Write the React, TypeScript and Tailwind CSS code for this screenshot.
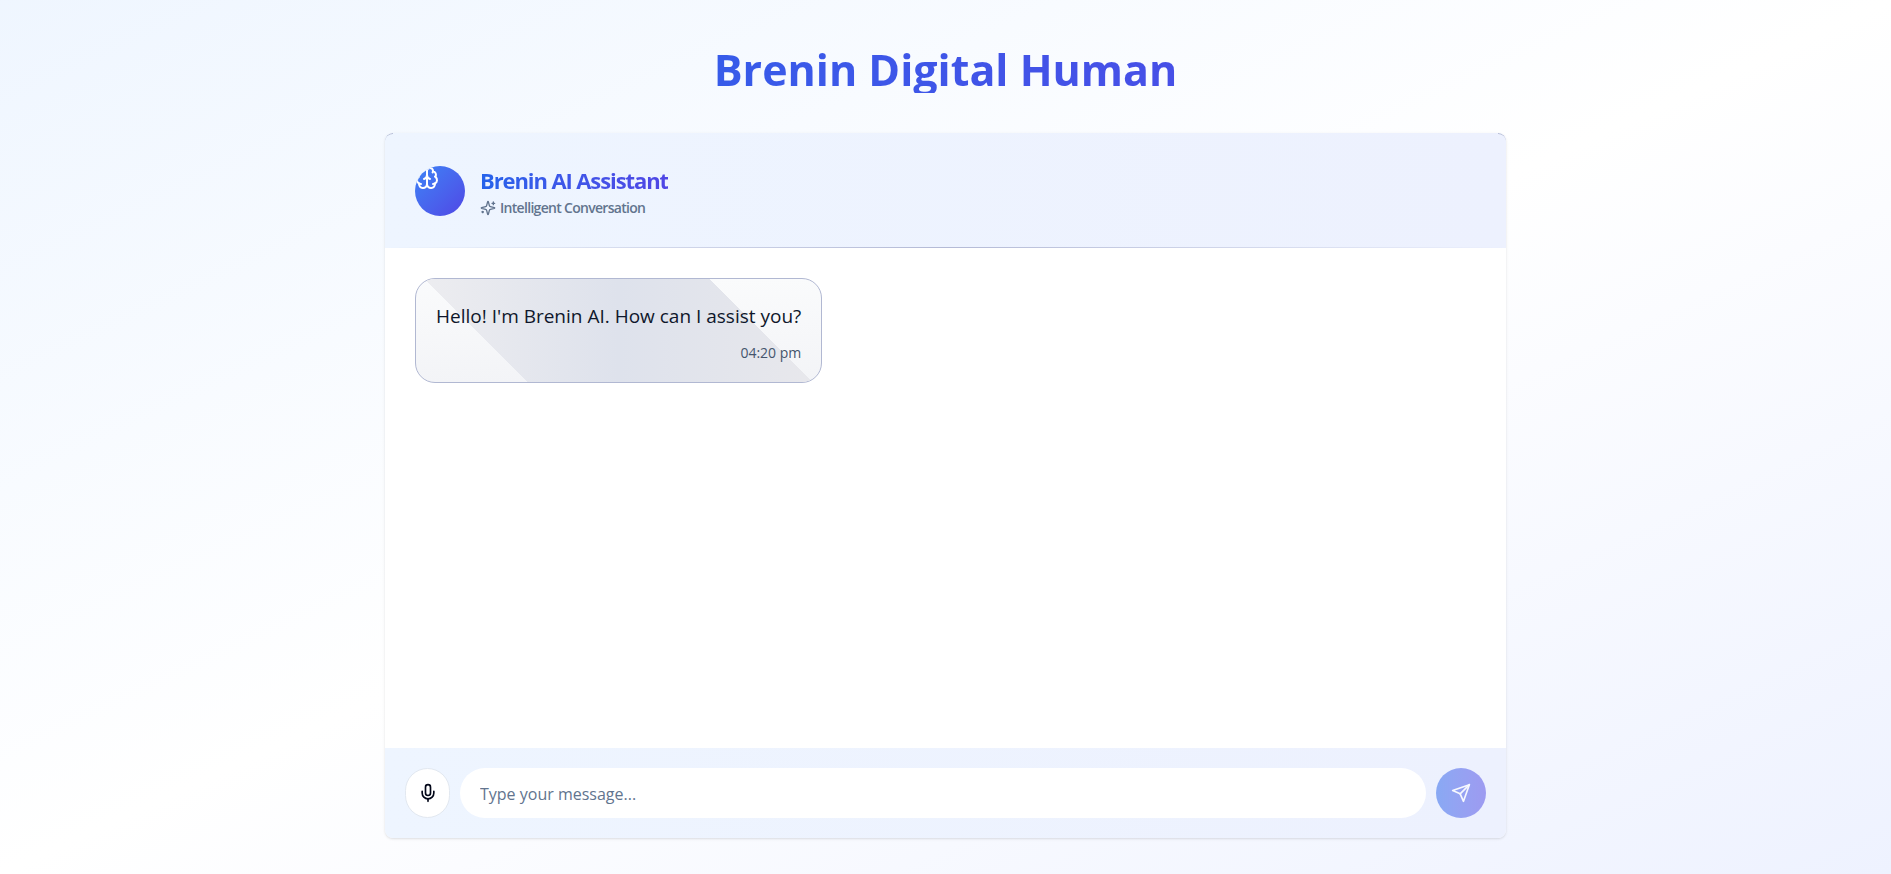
import { FormEvent, ReactNode, useState } from "react";
import { Mic } from "lucide-react";

interface Message {
  id: number;
  text: string;
  time: string;
}

const initialMessages: Message[] = [
  { id: 1, text: "Hello! I'm Brenin AI. How can I assist you?", time: "04:20 pm" },
];

function Icon({ className, children }: { className: string; children: ReactNode }) {
  return (
    <svg
      aria-hidden="true"
      viewBox="0 0 24 24"
      fill="none"
      stroke="currentColor"
      strokeWidth="2"
      strokeLinecap="round"
      strokeLinejoin="round"
      className={className}
    >
      {children}
    </svg>
  );
}

function BrainIcon({ className }: { className: string }) {
  return (
    <Icon className={className}>
      <path d="M12 5a3 3 0 1 0-5.997.125 4 4 0 0 0-2.526 5.77 4 4 0 0 0 .556 6.588A4 4 0 1 0 12 18Z" />
      <path d="M12 5a3 3 0 1 1 5.997.125 4 4 0 0 1 2.526 5.77 4 4 0 0 1-.556 6.588A4 4 0 1 1 12 18Z" />
      <path d="M15 13a4.5 4.5 0 0 1-3-4 4.5 4.5 0 0 1-3 4" />
      <path d="M17.599 6.5a3 3 0 0 0 .399-1.375" />
      <path d="M6.003 5.125A3 3 0 0 0 6.401 6.5" />
      <path d="M3.477 10.896a4 4 0 0 1 .585-.396" />
      <path d="M19.938 10.5a4 4 0 0 1 .585.396" />
      <path d="M6 18a4 4 0 0 1-1.967-.516" />
      <path d="M19.967 17.484A4 4 0 0 1 18 18" />
    </Icon>
  );
}

function SparklesIcon({ className }: { className: string }) {
  return (
    <Icon className={className}>
      <path d="M9.937 15.5A2 2 0 0 0 8.5 14.063l-6.135-1.582a.5.5 0 0 1 0-.962L8.5 9.936A2 2 0 0 0 9.937 8.5l1.582-6.135a.5.5 0 0 1 .963 0L14.063 8.5A2 2 0 0 0 15.5 9.937l6.135 1.581a.5.5 0 0 1 0 .964L15.5 14.063a2 2 0 0 0-1.437 1.437l-1.582 6.135a.5.5 0 0 1-.963 0z" />
      <path d="M20 3v4" />
      <path d="M22 5h-4" />
      <path d="M4 17v2" />
      <path d="M5 18H3" />
    </Icon>
  );
}

function SendIcon({ className }: { className: string }) {
  return (
    <Icon className={className}>
      <path d="m22 2-7 20-4-9-9-4Z" />
      <path d="M22 2 11 13" />
    </Icon>
  );
}

function ChatHeader() {
  return (
    <header className="relative flex items-center gap-[15px] bg-gradient-to-r from-[#eef5ff] to-[#edf1fe] px-[30px] py-[30px]">
      <div className="size-[50px] shrink-0 overflow-hidden rounded-full bg-gradient-to-br from-[#3b82f6] to-[#4f46e5]">
        <BrainIcon className="size-6 text-white" />
      </div>
      <div>
        <h2 className="w-fit bg-gradient-to-r from-[#2563eb] to-[#4f46e5] bg-clip-text text-[22px] leading-[34px] font-bold tracking-tighter text-transparent">
          Brenin AI Assistant
        </h2>
        <p className="mt-px flex items-center gap-1 text-sm leading-5 font-semibold tracking-tighter text-slate-500">
          <SparklesIcon className="size-4" />
          Intelligent Conversation
        </p>
      </div>
      <div className="absolute inset-x-0 bottom-0 h-px bg-gradient-to-r from-transparent via-[#b4bad6] to-transparent" />
      <div className="absolute top-0 left-0 size-2 rounded-tl-lg border-t border-[#b1b8d2]" />
      <div className="absolute top-0 right-0 size-2 rounded-tr-lg border-t border-[#b1b8d2]" />
    </header>
  );
}

function Bubble({ message }: { message: Message }) {
  return (
    <li className="relative w-fit overflow-hidden rounded-[20px] border border-[#b1b8d2] bg-gradient-to-b from-[#fafbfc] to-[#f3f4f7] px-5 pt-5 pb-[17px]">
      <div className="absolute inset-0 bg-gradient-to-r from-[#ededf0] via-[#dee2ec] to-[#e8e8ec] [mask-image:linear-gradient(45deg,transparent_22%,#000_22%,#000_78%,transparent_78%)]" />
      <p className="relative text-[19px] leading-[34px] text-slate-900">{message.text}</p>
      <time className="relative mt-2 block text-right text-sm leading-6 text-slate-600">{message.time}</time>
    </li>
  );
}

export default function App() {
  const [messages, setMessages] = useState(initialMessages);
  const [draft, setDraft] = useState("");

  const send = (event: FormEvent) => {
    event.preventDefault();
    const text = draft.trim();
    if (!text) return;
    const time = new Date().toLocaleTimeString("en-IN", { hour: "2-digit", minute: "2-digit" });
    setMessages([...messages, { id: messages.length + 1, text, time }]);
    setDraft("");
  };

  return (
    <div className="flex min-h-screen flex-col bg-gradient-to-br from-blue-50 via-white to-indigo-50 px-4 pt-[47px] pb-9 font-['Segoe_UI','Open_Sans',sans-serif]">
      <h1 className="mx-auto mb-10 w-full max-w-[1121px] bg-gradient-to-r from-[#2563eb] to-[#4f46e5] bg-clip-text text-center text-[43px] leading-[46px] font-bold text-transparent">
        Brenin Digital Human
      </h1>
      <main className="mx-auto flex w-full max-w-[1121px] flex-1 flex-col overflow-hidden rounded-lg bg-white shadow-sm">
        <ChatHeader />
        <ul className="flex flex-1 flex-col gap-4 p-[30px]">
          {messages.map((message) => (
            <Bubble key={message.id} message={message} />
          ))}
        </ul>
        <form onSubmit={send} className="flex gap-[10px] bg-gradient-to-r from-[#eef5ff] to-[#edf1fe] p-5">
          <button
            type="button"
            aria-label="Record voice"
            className="flex h-[50px] w-[45px] shrink-0 items-center justify-center rounded-full border border-slate-200 bg-white text-slate-950"
          >
            <Mic className="size-5" />
          </button>
          <input
            aria-label="Message"
            placeholder="Type your message..."
            value={draft}
            onChange={(event) => setDraft(event.target.value)}
            className="h-[50px] min-w-0 flex-1 rounded-full bg-white px-5 pt-0.5 text-base text-slate-900 outline-none placeholder:text-slate-500"
          />
          <button
            type="submit"
            aria-label="Send message"
            disabled={!draft.trim()}
            className="flex size-[50px] shrink-0 items-center justify-center rounded-full bg-gradient-to-r from-[#2563eb] to-[#4f46e5] text-white disabled:opacity-50"
          >
            <SendIcon className="size-5" />
          </button>
        </form>
      </main>
    </div>
  );
}
